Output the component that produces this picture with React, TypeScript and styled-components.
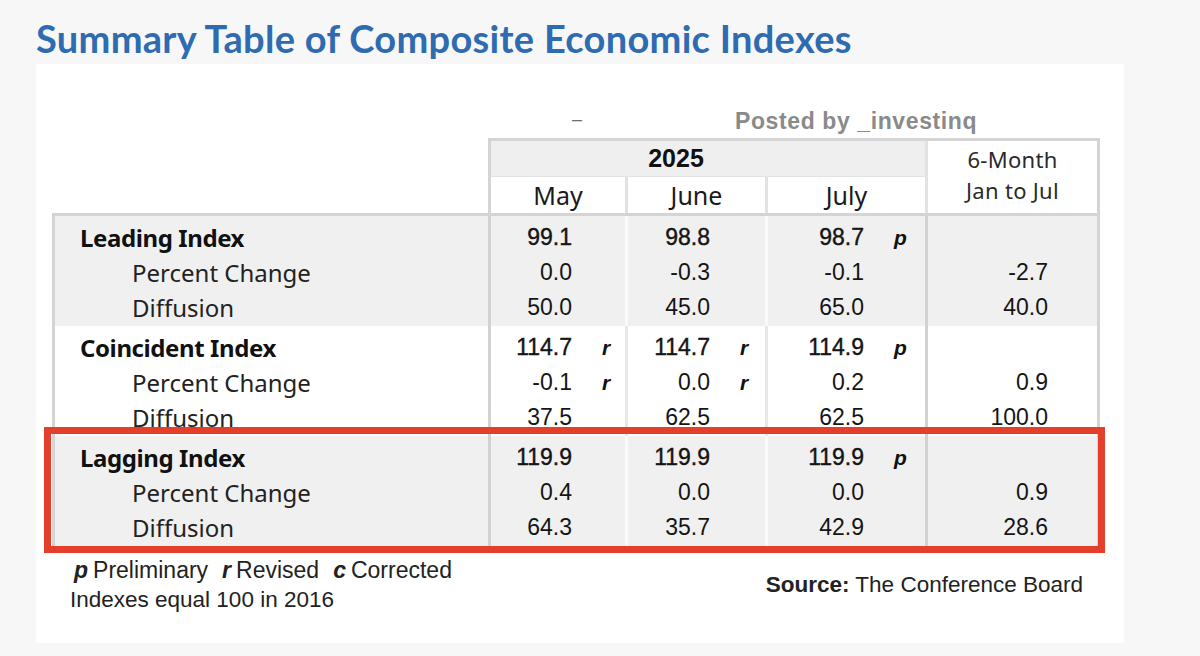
import React from "react";
import styled, { createGlobalStyle } from "styled-components";

const Global = createGlobalStyle`
  html, body { margin: 0; padding: 0; background: #f7f7f7; }
  body { width: 1200px; height: 656px; overflow: hidden; }
`;

const LABEL_FONT = `"Noto Sans", "Open Sans", sans-serif`;
const NUM_FONT = `"Liberation Sans", Arial, sans-serif`;

const Page = styled.div`
  width: 1200px;
  height: 656px;
  box-sizing: border-box;
  padding-left: 36px;
  background: #f7f7f7;
  display: flex;
  flex-direction: column;
`;

const Title = styled.h1`
  margin: 0;
  box-sizing: border-box;
  height: 64px;
  padding-top: 18px;
  font-family: Lato, "Noto Sans", sans-serif;
  font-weight: 700;
  font-size: 38px;
  line-height: 40px;
  color: #2e6bb0;
  letter-spacing: 0.3px;
`;

const Panel = styled.div`
  width: 1088px;
  height: 579px;
  box-sizing: border-box;
  background: #ffffff;
  padding: 0 24px 0 16px;
  display: flex;
  flex-direction: column;
`;

const TopLine = styled.div`
  height: 74px;
  box-sizing: border-box;
  display: flex;
  align-items: flex-end;
  padding: 0 0 3px 520px;
  gap: 153px;
  font-family: ${NUM_FONT};
  color: #8a8a8a;
`;

const Dash = styled.span`
  font-size: 18px;
  line-height: 20px;
  padding-bottom: 6px;
  color: #6f6f6f;
`;

const Posted = styled.span`
  font-size: 23px;
  font-weight: 700;
  line-height: 28px;
  letter-spacing: 0.6px;
`;

const HeaderBlock = styled.div`
  margin-left: 436px;
  width: 612px;
  box-sizing: border-box;
  border: 3px solid #d4d4d4;
  border-bottom: none;
  background: #e2e2e2;
  display: grid;
  grid-template-columns: 134px 137px 157px 169px;
  grid-template-rows: 35px 36px;
  column-gap: 3px;
  row-gap: 1px;
`;

const YearCell = styled.div`
  grid-column: 1 / 4;
  grid-row: 1;
  background: #efefef;
  display: flex;
  align-items: center;
  justify-content: center;
  padding-right: 64px;
  font-family: ${NUM_FONT};
  font-weight: 700;
  font-size: 25px;
  color: #111;
`;

const MonthCell = styled.div`
  grid-row: 2;
  background: #ffffff;
  display: flex;
  align-items: center;
  justify-content: center;
  font-family: ${LABEL_FONT};
  font-size: 25px;
  color: #1a1a1a;
`;

const SixMonthCell = styled.div`
  grid-column: 4;
  grid-row: 1 / 3;
  background: #ffffff;
  display: flex;
  flex-direction: column;
  align-items: center;
  justify-content: center;
  font-family: ${LABEL_FONT};
  font-size: 22px;
  line-height: 31px;
  letter-spacing: 0.3px;
  color: #2a2a2a;
  padding-bottom: 4px;
`;

const Body = styled.div`
  width: 1048px;
  box-sizing: border-box;
  border: 3px solid #d4d4d4;
  display: flex;
  flex-direction: column;
`;

const Group = styled.div<{ $shade: boolean; $flagged?: boolean }>`
  position: relative;
  height: 110px;
  display: grid;
  grid-template-columns: 433px 137px 140px 160px 172px;
  background: ${(p) => (p.$shade ? "#f0f0f0" : "#ffffff")};
  ${(p) =>
    p.$flagged
      ? `&::after {
    content: "";
    position: absolute;
    left: -11px;
    right: -8px;
    top: -9px;
    bottom: -7px;
    border: 7px solid #e43f2a;
    pointer-events: none;
  }`
      : ""}
`;

const LabelCell = styled.div`
  padding-top: 4px;
  display: flex;
  flex-direction: column;
`;

const IndexName = styled.div`
  height: 35px;
  line-height: 35px;
  padding-left: 25px;
  font-family: ${LABEL_FONT};
  font-weight: 700;
  font-size: 24px;
  color: #111;
  letter-spacing: -0.4px;
`;

const SubLabel = styled.div`
  height: 35px;
  line-height: 35px;
  padding-left: 77px;
  font-family: ${LABEL_FONT};
  font-size: 24px;
  color: #222;
`;

const DataCell = styled.div<{ $line: string }>`
  border-left: 3px solid ${(p) => p.$line};
  padding-top: 4px;
  display: flex;
  flex-direction: column;
`;

const DataLine = styled.div<{ $strong?: boolean }>`
  height: 35px;
  line-height: 35px;
  display: flex;
  justify-content: flex-end;
  font-family: ${NUM_FONT};
  font-size: 23px;
  color: #151515;
  -webkit-text-stroke: ${(p) => (p.$strong ? "0.4px #151515" : "0")};
`;

const Flag = styled.span<{ $slot: number }>`
  width: ${(p) => p.$slot}px;
  box-sizing: border-box;
  padding-left: 30px;
  font-family: ${NUM_FONT};
  font-weight: 700;
  font-style: italic;
  font-size: 21px;
  color: #111;
  -webkit-text-stroke: 0;
`;

const Footer = styled.div`
  display: flex;
  justify-content: space-between;
  align-items: center;
  padding: 6px 17px 0 20px;
  font-family: ${NUM_FONT};
  font-size: 23px;
  color: #222;
`;

const Notes = styled.div`
  display: flex;
  flex-direction: column;
  line-height: 30px;
`;

const NoteLine = styled.div`
  padding-left: 2px;
`;

const NoteKey = styled.b`
  font-style: italic;
  margin-right: 5px;
  margin-left: 14px;
  &:first-child {
    margin-left: 0;
  }
`;

const BaseNote = styled.div`
  font-size: 22.5px;
  margin-left: -2px;
`;

const Source = styled.div`
  font-size: 22.5px;
`;

type Row = { v: string; f?: string };
type Col = Row[];
type GroupData = { name: string; shade: boolean; flagged?: boolean; cols: Col[] };

const SLOTS = [53, 55, 61, 49];

const groups: GroupData[] = [
  {
    name: "Leading Index",
    shade: true,
    cols: [
      [{ v: "99.1" }, { v: "0.0" }, { v: "50.0" }],
      [{ v: "98.8" }, { v: "-0.3" }, { v: "45.0" }],
      [{ v: "98.7", f: "p" }, { v: "-0.1" }, { v: "65.0" }],
      [{ v: "" }, { v: "-2.7" }, { v: "40.0" }],
    ],
  },
  {
    name: "Coincident Index",
    shade: false,
    cols: [
      [{ v: "114.7", f: "r" }, { v: "-0.1", f: "r" }, { v: "37.5" }],
      [{ v: "114.7", f: "r" }, { v: "0.0", f: "r" }, { v: "62.5" }],
      [{ v: "114.9", f: "p" }, { v: "0.2" }, { v: "62.5" }],
      [{ v: "" }, { v: "0.9" }, { v: "100.0" }],
    ],
  },
  {
    name: "Lagging Index",
    shade: true,
    flagged: true,
    cols: [
      [{ v: "119.9" }, { v: "0.4" }, { v: "64.3" }],
      [{ v: "119.9" }, { v: "0.0" }, { v: "35.7" }],
      [{ v: "119.9", f: "p" }, { v: "0.0" }, { v: "42.9" }],
      [{ v: "" }, { v: "0.9" }, { v: "28.6" }],
    ],
  },
];

function lineColor(shade: boolean, col: number) {
  if (col === 0 || col === 3) return "#d2d2d2";
  return shade ? "#fafafa" : "#e8e8e8";
}

export default function App() {
  return (
    <>
      <Global />
      <Page>
        <Title>Summary Table of Composite Economic Indexes</Title>
        <Panel>
          <TopLine>
            <Dash>–</Dash>
            <Posted>Posted by _investinq</Posted>
          </TopLine>
          <HeaderBlock>
            <YearCell>2025</YearCell>
            <MonthCell>May</MonthCell>
            <MonthCell>June</MonthCell>
            <MonthCell>July</MonthCell>
            <SixMonthCell>
              <span>6-Month</span>
              <span>Jan to Jul</span>
            </SixMonthCell>
          </HeaderBlock>
          <Body>
            {groups.map((g) => (
              <Group key={g.name} $shade={g.shade} $flagged={g.flagged}>
                <LabelCell>
                  <IndexName>{g.name}</IndexName>
                  <SubLabel>Percent Change</SubLabel>
                  <SubLabel>Diffusion</SubLabel>
                </LabelCell>
                {g.cols.map((c, ci) => (
                  <DataCell key={ci} $line={lineColor(g.shade, ci)}>
                    {c.map((r, ri) => (
                      <DataLine key={ri} $strong={ri === 0}>
                        <span>{r.v}</span>
                        <Flag $slot={SLOTS[ci]}>{r.f ?? ""}</Flag>
                      </DataLine>
                    ))}
                  </DataCell>
                ))}
              </Group>
            ))}
          </Body>
          <Footer>
            <Notes>
              <NoteLine>
                <NoteKey>p</NoteKey>Preliminary
                <NoteKey>r</NoteKey>Revised
                <NoteKey>c</NoteKey>Corrected
              </NoteLine>
              <BaseNote>Indexes equal 100 in 2016</BaseNote>
            </Notes>
            <Source>
              <b>Source:</b> The Conference Board
            </Source>
          </Footer>
        </Panel>
      </Page>
    </>
  );
}
